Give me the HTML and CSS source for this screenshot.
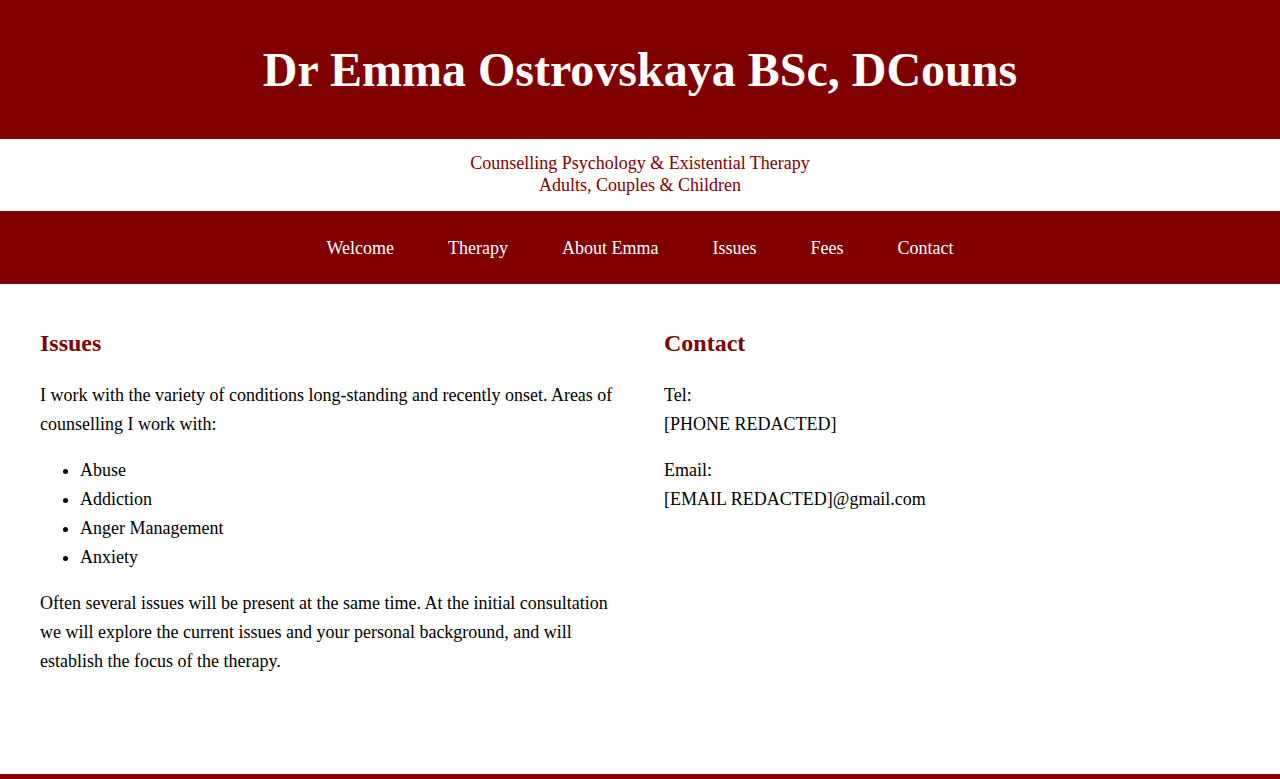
FILE: index.html
```html
<!DOCTYPE html>
<html lang="en">
<head>
<meta charset="utf-8">
<title>Dr Emma Ostrovskaya BSc, DCouns</title>
<link rel="stylesheet" href="styles.css">
</head>
<body>
<header class="masthead">
  <h1 class="title">Dr Emma Ostrovskaya BSc, DCouns</h1>
</header>
<div class="tagline">
  <div>Counselling Psychology &amp; Existential Therapy</div>
  <div>Adults, Couples &amp; Children</div>
</div>
<nav class="nav">
  <a href="#">Welcome</a>
  <a href="#">Therapy</a>
  <a href="#">About Emma</a>
  <a href="#">Issues</a>
  <a href="#">Fees</a>
  <a href="#">Contact</a>
</nav>
<main class="content">
  <section class="col">
    <h2 class="heading">Issues</h2>
    <p>I work with the variety of conditions long-standing and recently onset. Areas of counselling I work with:</p>
    <ul class="list">
      <li>Abuse</li>
      <li>Addiction</li>
      <li>Anger Management</li>
      <li>Anxiety</li>
    </ul>
    <p>Often several issues will be present at the same time. At the initial consultation we will explore the current issues and your personal background, and will establish the focus of the therapy.</p>
  </section>
  <section class="col">
    <h2 class="heading">Contact</h2>
    <p>Tel:<br>[PHONE REDACTED]</p>
    <p>Email:<br>[EMAIL REDACTED]@gmail.com</p>
  </section>
</main>
<footer class="footer"></footer>
</body>
</html>
```
FILE: styles.css
```css
* { box-sizing: border-box; }
html, body { margin: 0; padding: 0; }
body {
  font-family: "Liberation Serif", "Times New Roman", serif;
  color: #000;
  background: #fff;
}
.masthead {
  background: #800000;
  height: 139px;
  display: flex;
  align-items: center;
  justify-content: center;
  padding-bottom: 1px;
}
.title {
  margin: 0;
  color: #fff;
  font-size: 48px;
  font-weight: bold;
  line-height: 55px;
  text-align: center;
}
.tagline {
  color: #800000;
  font-size: 18px;
  line-height: 22px;
  text-align: center;
  padding: 13px 0 15px;
}
.nav {
  background: #800000;
  height: 73px;
  display: flex;
  justify-content: center;
  align-items: center;
  padding-top: 1px;
}
.nav a {
  color: #fff;
  text-decoration: none;
  font-size: 18px;
  line-height: 21px;
  padding: 0 27px;
}
.content {
  display: grid;
  grid-template-columns: 1fr 1fr;
  column-gap: 48px;
  padding: 45px 40px 0;
  min-height: 490px;
  align-content: start;
}
.heading {
  margin: 0 0 23px;
  color: #800000;
  font-size: 24px;
  line-height: 29px;
  font-weight: bold;
}
.col p {
  margin: 0 0 17px;
  font-size: 18px;
  line-height: 29px;
}
.list {
  margin: 0 0 17px;
  padding-left: 40px;
  font-size: 18px;
  line-height: 29px;
}
.footer {
  background: #800000;
  height: 5px;
}
```
